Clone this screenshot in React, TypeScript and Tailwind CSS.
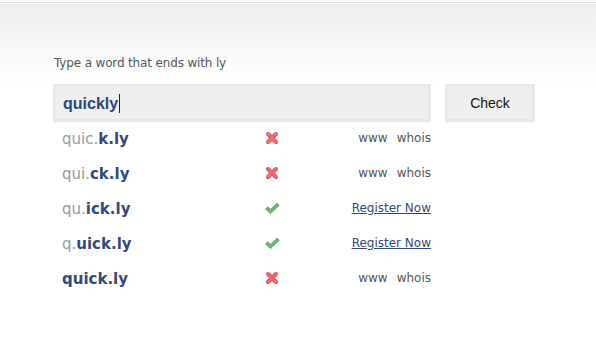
import type { ReactNode } from 'react';

type Row = {
  pre: string;
  post: string;
  available: boolean;
};

const ROWS: Row[] = [
  { pre: 'quic.', post: 'k.ly', available: false },
  { pre: 'qui.', post: 'ck.ly', available: false },
  { pre: 'qu.', post: 'ick.ly', available: true },
  { pre: 'q.', post: 'uick.ly', available: true },
  { pre: '', post: 'quick.ly', available: false },
];

const TAHOMA = { fontFamily: 'Tahoma, "DejaVu Sans", sans-serif' };
const ARIAL = { fontFamily: '"Liberation Sans", Arial, sans-serif' };

function CrossIcon() {
  return (
    <svg width="16" height="16" viewBox="0 0 16 16" aria-hidden>
      <g strokeLinecap="round">
        <path d="M4 4 L12 12 M12 4 L4 12" stroke="#d4505a" strokeWidth="4" />
        <path d="M4 4 L12 12 M12 4 L4 12" stroke="#f06b74" strokeWidth="2.4" />
      </g>
    </svg>
  );
}

function CheckIcon() {
  return (
    <svg width="17" height="15" viewBox="0 0 17 15" aria-hidden>
      <path
        d="M1.5 8 L3.8 5.9 L6.5 8.5 L13 2.3 L15.2 4.3 L6.5 12.6 Z"
        fill="#72b86f"
        stroke="#4f954d"
        strokeWidth="0.8"
        strokeLinejoin="round"
      />
    </svg>
  );
}

function Cell({ children, className }: { children: ReactNode; className?: string }) {
  return <div className={className}>{children}</div>;
}

export default function App() {
  return (
    <div className="w-[596px] h-[351px] bg-white overflow-hidden">
      <div className="h-[2px]" />
      <div className="h-[1px] bg-[#e2e2e2]" />
      <div className="h-[1px]" />
      <div className="bg-gradient-to-b from-[#eeeeee] to-white pl-[54px] pt-[51px] h-[80px]">
        <p className="text-[12px] text-[#585858] leading-[16px] tracking-[-0.15px]" style={TAHOMA}>
          Type a word that ends with ly
        </p>
      </div>
      <div className="pl-[53px] flex gap-[14px]">
        <div className="w-[378px] h-[38px] border-[3px] border-[#e8e8e8] bg-[#efefef] flex items-center pl-[7px] pt-[1px]">
          <span className="text-[16px] font-bold text-[#2f4677]" style={ARIAL}>
            quickly
          </span>
          <span className="w-[1px] h-[19px] bg-[#222] ml-[1px]" />
        </div>
        <button
          type="button"
          className="w-[90px] h-[38px] border-[3px] border-[#e8e8e8] bg-[#efefef] text-[14px] text-[#111] pt-[1px]"
          style={ARIAL}
        >
          Check
        </button>
      </div>
      <div className="pl-[62px]">
        {ROWS.map((row) => (
          <div key={row.post} className="h-[35px] pb-[3px] flex items-center">
            <Cell className="w-[200px]">
              <span className="text-[15px] text-[#9a9a9a]" style={TAHOMA}>
                {row.pre}
              </span>
              <span className="text-[15px] font-bold text-[#34497a]" style={TAHOMA}>
                {row.post}
              </span>
            </Cell>
            <Cell className="w-[20px] flex justify-center">
              {row.available ? <CheckIcon /> : <CrossIcon />}
            </Cell>
            <Cell className="w-[149px] flex justify-end">
              {row.available ? (
                <a href="#" className="text-[12px] text-[#34497a] underline" style={TAHOMA}>
                  Register Now
                </a>
              ) : (
                <span className="text-[12px] text-[#555] flex gap-[9px]" style={TAHOMA}>
                  <span>www</span>
                  <span>whois</span>
                </span>
              )}
            </Cell>
          </div>
        ))}
      </div>
    </div>
  );
}
